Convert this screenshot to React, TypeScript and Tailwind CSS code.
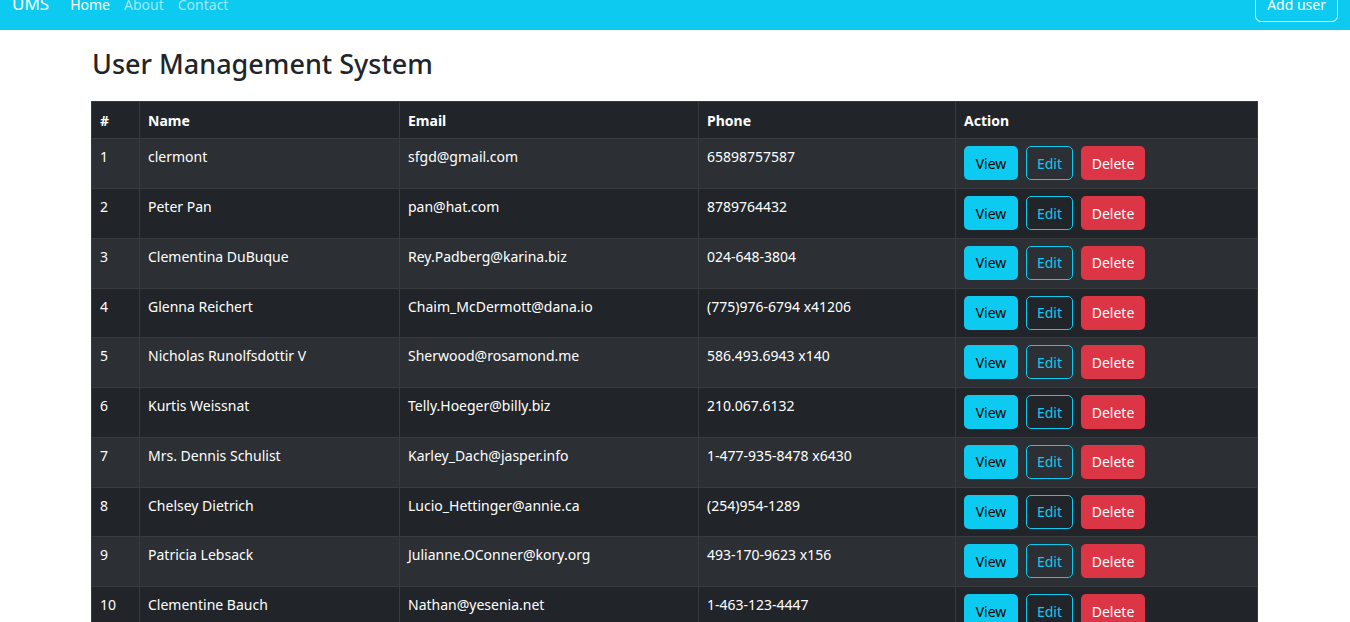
import React from "react";

type User = {
  id: number;
  name: string;
  email: string;
  phone: string;
};

const users: User[] = [
  { id: 1, name: "clermont", email: "sfgd@gmail.com", phone: "65898757587" },
  { id: 2, name: "Peter Pan", email: "pan@hat.com", phone: "8789764432" },
  { id: 3, name: "Clementina DuBuque", email: "Rey.Padberg@karina.biz", phone: "024-648-3804" },
  { id: 4, name: "Glenna Reichert", email: "Chaim_McDermott@dana.io", phone: "(775)976-6794 x41206" },
  { id: 5, name: "Nicholas Runolfsdottir V", email: "Sherwood@rosamond.me", phone: "586.493.6943 x140" },
  { id: 6, name: "Kurtis Weissnat", email: "Telly.Hoeger@billy.biz", phone: "210.067.6132" },
  { id: 7, name: "Mrs. Dennis Schulist", email: "Karley_Dach@jasper.info", phone: "1-477-935-8478 x6430" },
  { id: 8, name: "Chelsey Dietrich", email: "Lucio_Hettinger@annie.ca", phone: "(254)954-1289" },
  { id: 9, name: "Patricia Lebsack", email: "Julianne.OConner@kory.org", phone: "493-170-9623 x156" },
  { id: 10, name: "Clementine Bauch", email: "Nathan@yesenia.net", phone: "1-463-123-4447" },
];

const Navbar = () => {
  return (
    <nav className="-mt-[22px] flex h-[52px] items-center justify-between bg-[#0dcaf0] px-3">
      <div className="flex items-center">
        <span className="mr-[21px] text-[17px] text-white">UMS</span>
        <ul className="flex gap-[14px] text-[14px]">
          <li className="text-white">Home</li>
          <li className="text-white/60">About</li>
          <li className="text-white/60">Contact</li>
        </ul>
      </div>
      <button className="h-[35px] rounded-md border border-white px-[11px] text-[14px] text-white">
        Add user
      </button>
    </nav>
  );
};

const App = () => {
  return (
    <div className="min-h-screen bg-white font-['Noto_Sans',sans-serif] text-[#212529]">
      <div className="h-[30px] overflow-hidden">
        <Navbar />
      </div>
      <main className="ml-[91px] w-[1167px]">
        <h1 className="mt-[18px] mb-[21px] ml-px text-[27px] font-medium leading-[1.2]">
          User Management System
        </h1>
        <table className="w-full border-collapse text-left text-[14px] text-white">
          <thead>
            <tr className="h-[37px] bg-[#212529]">
              <th className="w-[48px] border border-[#373b3e] px-2 font-bold">#</th>
              <th className="w-[260px] border border-[#373b3e] px-2 font-bold">Name</th>
              <th className="w-[299px] border border-[#373b3e] px-2 font-bold">Email</th>
              <th className="w-[257px] border border-[#373b3e] px-2 font-bold">Phone</th>
              <th className="border border-[#373b3e] px-2 font-bold">Action</th>
            </tr>
          </thead>
          <tbody>
            {users.map((user) => (
              <tr
                key={user.id}
                className={`h-[49.75px] ${user.id % 2 === 1 ? "bg-[#2c3034]" : "bg-[#212529]"}`}
              >
                <td className="border border-[#373b3e] px-2 pt-[7px] align-top">{user.id}</td>
                <td className="border border-[#373b3e] px-2 pt-[7px] align-top">{user.name}</td>
                <td className="border border-[#373b3e] px-2 pt-[7px] align-top">{user.email}</td>
                <td className="border border-[#373b3e] px-2 pt-[7px] align-top">{user.phone}</td>
                <td className="border border-[#373b3e] px-2 py-[7px] align-top">
                  <div className="flex gap-2">
                    <button className="h-[34px] w-[54px] rounded-[5px] bg-[#0dcaf0] text-[14px] text-black">
                      View
                    </button>
                    <button className="h-[34px] w-[47px] rounded-[5px] border border-[#0dcaf0] text-[14px] text-[#0dcaf0]">
                      Edit
                    </button>
                    <button className="h-[34px] w-[64px] rounded-[5px] bg-[#dc3545] text-[14px] text-white">
                      Delete
                    </button>
                  </div>
                </td>
              </tr>
            ))}
          </tbody>
        </table>
      </main>
    </div>
  );
};

export default App;
